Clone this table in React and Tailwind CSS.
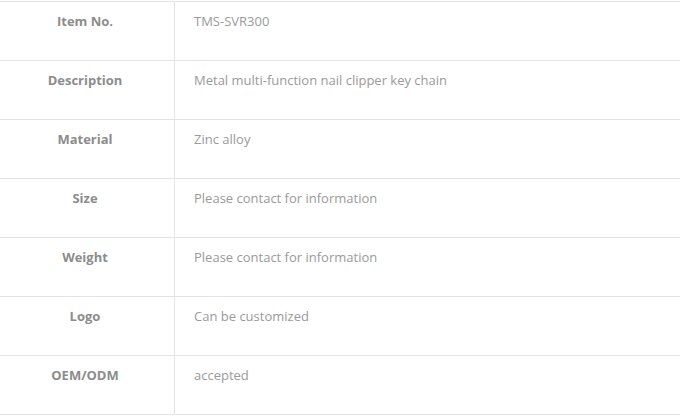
const rows = [
  ["Item No.", "TMS-SVR300"],
  ["Description", "Metal multi-function nail clipper key chain"],
  ["Material", "Zinc alloy"],
  ["Size", "Please contact for information"],
  ["Weight", "Please contact for information"],
  ["Logo", "Can be customized"],
  ["OEM/ODM", "accepted"],
];

const App = () => {
  return (
    <div className="bg-white w-[681px] h-[416px] pt-px" style={{ fontFamily: '"Open Sans", sans-serif' }}>
      <div className="w-[680px] border-b border-[#e4e4e4]">
        {rows.map(([label, value]) => (
          <div key={label} className="flex h-[59px] border-t border-[#e4e4e4]">
            <div className="w-[175px] shrink-0 border-r border-[#e4e4e4] text-center pt-[10px] pr-[4px] text-[13px] leading-[18px] font-bold text-[#8c8c8c]">
              {label}
            </div>
            <div className="flex-1 pl-[19px] pt-[10px] text-[13px] leading-[18px] text-[#9a9a9a]">
              {value}
            </div>
          </div>
        ))}
      </div>
    </div>
  );
};

export default App;
